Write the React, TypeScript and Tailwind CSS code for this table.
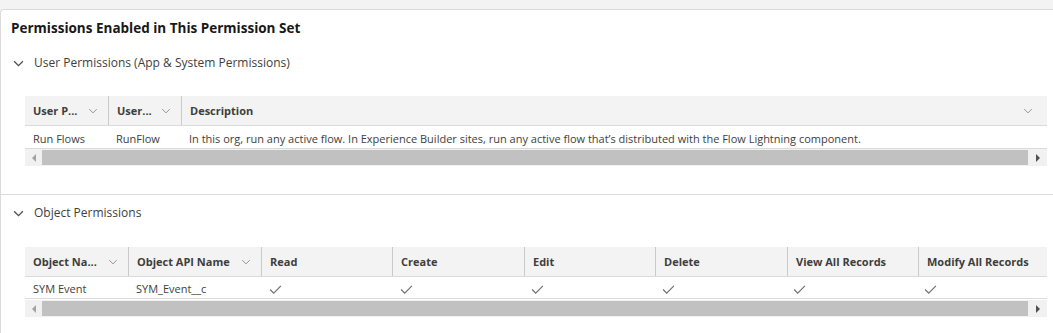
import React from 'react'

const font = { fontFamily: '"Open Sans", "Noto Sans", sans-serif' }

const Chevron = ({ className = '', sw = 1.2 }: { className?: string; sw?: number }) => (
  <svg viewBox="0 0 12 8" className={className} fill="none" stroke="currentColor" strokeWidth={sw}>
    <path d="M1 1.5l5 5 5-5" />
  </svg>
)

const Check = () => (
  <svg viewBox="0 0 14 10" className="h-[9px] w-[13px] text-[#706e6b]" fill="none" stroke="currentColor" strokeWidth={1.3}>
    <path d="M1 5l4 4 8-8" />
  </svg>
)

const Scrollbar = () => (
  <div className="flex h-[17px] items-center bg-[#f1f1f1]">
    <div className="flex w-[17px] justify-center">
      <div className="h-0 w-0 border-y-[4px] border-r-[4px] border-y-transparent border-r-[#a3a3a3]" />
    </div>
    <div className="h-[15px] flex-1 bg-[#c1c1c1]" />
    <div className="flex w-[19px] justify-center">
      <div className="h-0 w-0 border-y-[4px] border-l-[4px] border-y-transparent border-l-[#505050]" />
    </div>
  </div>
)

interface Col {
  label: string
  width: string
  sort?: boolean
}

const HeaderCell = ({ col, first, grow }: { col: Col; first: boolean; grow?: boolean }) => (
  <div
    className={`flex h-[29px] items-center justify-between pl-2 pr-[10px] pt-px ${col.width} ${grow ? 'flex-1 pr-[14px]' : 'shrink-0'} ${
      first ? '' : 'border-l border-[#c9c9c9]'
    }`}
  >
    <span className="whitespace-nowrap text-[11px] font-bold text-[#3e3e3c]">{col.label}</span>
    {col.sort && <Chevron className="h-[6px] w-[10px] shrink-0 text-[#8a8a8a]" />}
  </div>
)

const Section = ({ title }: { title: string }) => (
  <div className="flex h-[18px] items-center gap-[10px] pl-[12px]">
    <Chevron className="h-[7px] w-[11px] text-[#514f4d]" sw={1.5} />
    <span className="text-[12px] text-[#3e3e3c]">{title}</span>
  </div>
)

export default function App() {
  const userCols: Col[] = [
    { label: 'User P...', width: 'w-[83px]', sort: true },
    { label: 'User...', width: 'w-[73px]', sort: true },
    { label: 'Description', width: 'w-auto', sort: true },
  ]
  const objCols: Col[] = [
    { label: 'Object Na...', width: 'w-[103px]', sort: true },
    { label: 'Object API Name', width: 'w-[133px]', sort: true },
    { label: 'Read', width: 'w-[131px]' },
    { label: 'Create', width: 'w-[132px]' },
    { label: 'Edit', width: 'w-[131px]' },
    { label: 'Delete', width: 'w-[132px]' },
    { label: 'View All Records', width: 'w-[131px]' },
    { label: 'Modify All Records', width: 'w-[129px]' },
  ]

  return (
    <div className="h-[333px] w-[1053px] overflow-hidden bg-[#f3f3f3]" style={font}>
      <div className="mt-[9px] h-[324px] rounded-tl-[4px] border-l border-t border-[#dddbda] bg-white">
        <h2 className="pl-[10px] pt-[9px] text-[13.5px] font-bold leading-[18px] text-[#181818]">
          Permissions Enabled in This Permission Set
        </h2>

        <div className="pt-[17px]">
          <Section title="User Permissions (App & System Permissions)" />
        </div>

        <div className="ml-[24px] mr-[6px] mt-[24px]">
          <div className="flex border-b border-[#dddbda] bg-[#f3f3f3]">
            {userCols.map((c, i) => (
              <HeaderCell key={c.label} col={c} first={i === 0} grow={i === 2} />
            ))}
          </div>
          <div className="flex h-[23px] items-center border-b border-[#dddbda] pt-[4px] text-[11px] text-[#3e3e3c]">
            <div className="w-[83px] shrink-0 pl-2">Run Flows</div>
            <div className="w-[73px] shrink-0 pl-2">RunFlow</div>
            <div className="flex-1 truncate pl-2">
              In this org, run any active flow. In Experience Builder sites, run any active flow that’s distributed with
              the Flow Lightning component.
            </div>
          </div>
          <div>
            <Scrollbar />
          </div>
        </div>

        <div className="mt-[28px] border-t border-[#dddbda] pt-[9px]">
          <Section title="Object Permissions" />
        </div>

        <div className="ml-[24px] mr-[6px] mt-[25px] overflow-hidden">
          <div className="flex border-b border-[#dddbda] bg-[#f3f3f3]">
            {objCols.map((c, i) => (
              <HeaderCell key={c.label} col={c} first={i === 0} />
            ))}
          </div>
          <div className="flex h-[22px] items-center border-b border-[#dddbda] pt-[3px] text-[11px] text-[#3e3e3c]">
            <div className="w-[103px] shrink-0 pl-2">SYM Event</div>
            <div className="w-[133px] shrink-0 pl-2">SYM_Event__c</div>
            {[0, 1, 2, 3, 4, 5].map((i) => (
              <div key={i} className="w-[131px] shrink-0 pl-2">
                <Check />
              </div>
            ))}
          </div>
          <div className="mt-px">
            <Scrollbar />
          </div>
        </div>
      </div>
    </div>
  )
}
